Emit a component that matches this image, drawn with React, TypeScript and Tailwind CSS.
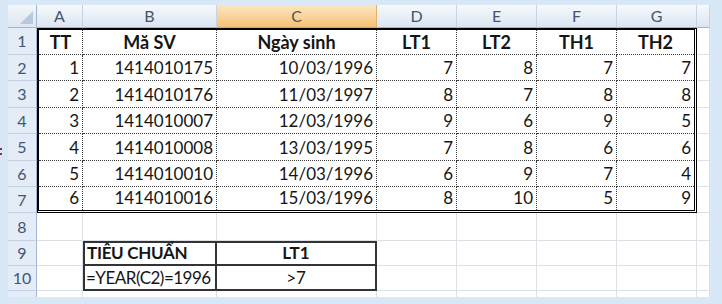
import React from "react";

const letters = ["A", "B", "C", "D", "E", "F", "G", ""];

const rows: (string | number)[][] = [
  [1, "1414010175", "10/03/1996", 7, 8, 7, 7],
  [2, "1414010176", "11/03/1997", 8, 7, 8, 8],
  [3, "1414010007", "12/03/1996", 9, 6, 9, 5],
  [4, "1414010008", "13/03/1995", 7, 8, 6, 6],
  [5, "1414010010", "14/03/1996", 6, 9, 7, 4],
  [6, "1414010016", "15/03/1996", 8, 10, 5, 9],
];

const heads = ["TT", "Mă SV", "Ngày sinh", "LT1", "LT2", "TH1", "TH2"];

function RowHead({ n }: { n?: number }) {
  return (
    <div className="flex items-center justify-center border-r border-b border-r-[#9eb6ce] border-b-[#c2d0e2] bg-[#e4ecf7] text-[16px] text-[#44556f]">
      {n}
    </div>
  );
}

function Empty() {
  return <div className="border-r border-b border-[#dde1e7] bg-white" />;
}

export default function App() {
  return (
    <div
      className="flex w-[722px] h-[304px] bg-[#d9e8f6] pt-[5px]"
      style={{ fontFamily: "Lato, 'Open Sans', sans-serif" }}
    >
      {/* stray marks at the left edge */}
      <div className="w-[8px] flex flex-col gap-[3px] pt-[143px]">
        <div className="w-[2px] h-[2px] bg-[#7a2f6d]" />
        <div className="w-[2px] h-[2px] bg-[#7a2f6d]" />
      </div>

      <div className="w-[702px] h-[292px] overflow-hidden grid grid-cols-[29px_46px_134px_160px_80px_80px_80px_80px_13px] grid-rows-[23px_27px_26px_27px_26px_27px_26px_26px_28px_25px_25px_20px] bg-white">
        {/* corner */}
        <div className="relative border-r border-b border-[#9eb6ce] bg-linear-to-b from-[#f3f6fa] to-[#dde6f1]">
          <svg className="absolute right-[3px] bottom-[3px]" width="13" height="13" viewBox="0 0 13 13">
            <polygon points="13,0 13,13 0,13" fill="#b9c9dd" />
          </svg>
        </div>

        {/* column headers */}
        {letters.map((l, i) =>
          l === "C" ? (
            <div
              key={i}
              className="flex items-center justify-center border-r border-b border-r-[#e2b36a] border-b-[#eda33f] bg-linear-to-b from-[#fce6be] to-[#f6c279] text-[16px] text-[#5b5346]"
            >
              {l}
            </div>
          ) : (
            <div
              key={i}
              className="flex items-center justify-center border-r border-b border-r-[#c5d3e5] border-b-[#9eb6ce] bg-linear-to-b from-[#f6f9fc] to-[#dbe5f1] text-[16px] text-[#44556f]"
            >
              {l}
            </div>
          )
        )}

        {/* rows 1-7 */}
        <RowHead n={1} />
        <div className="col-span-7 row-span-7 border-t-2 border-l-2 border-r-[3px] border-b-[3px] border-black [border-right-style:double] [border-bottom-style:double] bg-white grid grid-cols-[44px_134px_160px_80px_80px_80px_77px] grid-rows-[25px_26px_27px_26px_27px_26px_23px] text-[17px] leading-5 text-[#151515]">
          {heads.map((h, i) => (
            <div
              key={h}
              className={
                i < 6
                  ? "flex items-end justify-center pb-[2px] text-[18px] font-bold border-r border-b border-dotted border-[#3c3c3c]"
                  : "flex items-end justify-center pb-[2px] text-[18px] font-bold border-b border-dotted border-[#3c3c3c]"
              }
            >
              {h}
            </div>
          ))}
          {rows.map((r, ri) =>
            r.map((v, ci) => {
              const last = ri === rows.length - 1;
              let cls = "flex items-end justify-end pr-[3px] pb-[2px] border-dotted border-[#3c3c3c]";
              if (ci < 6) cls += " border-r";
              if (!last) cls += " border-b";
              return (
                <div key={ri + "-" + ci} className={cls}>
                  {v}
                </div>
              );
            })
          )}
        </div>
        <Empty />
        {[2, 3, 4, 5, 6, 7].map((n) => (
          <React.Fragment key={n}>
            <RowHead n={n} />
            <Empty />
          </React.Fragment>
        ))}

        {/* row 8 */}
        <RowHead n={8} />
        {[0, 1, 2, 3, 4, 5, 6, 7].map((i) => (
          <Empty key={i} />
        ))}

        {/* rows 9-10 with criteria block */}
        <RowHead n={9} />
        <Empty />
        <div className="col-span-2 row-span-2 border-2 border-[#333] bg-white grid grid-cols-[132px_158px] grid-rows-[23px_23px] text-[17px] leading-5 text-[#151515]">
          <div className="flex items-end pl-[2px] pb-[1px] font-bold tracking-[-0.3px] border-r-2 border-b-2 border-[#333]">
            TIÊU CHUẨN
          </div>
          <div className="flex items-end justify-center pb-[1px] font-bold border-b-2 border-[#333]">
            LT1
          </div>
          <div className="flex items-end pl-[1px] pb-[1px] tracking-[-0.5px] border-r-2 border-[#333]">
            =YEAR(C2)=1996
          </div>
          <div className="flex items-end justify-center pb-[1px]">&gt;7</div>
        </div>
        {[0, 1, 2, 3, 4].map((i) => (
          <Empty key={"r9" + i} />
        ))}
        <RowHead n={10} />
        <Empty />
        {[0, 1, 2, 3, 4].map((i) => (
          <Empty key={"r10" + i} />
        ))}

        {/* row 11 (cut off) */}
        <RowHead />
        {[0, 1, 2, 3, 4, 5, 6, 7].map((i) => (
          <Empty key={"r11" + i} />
        ))}
      </div>
    </div>
  );
}
